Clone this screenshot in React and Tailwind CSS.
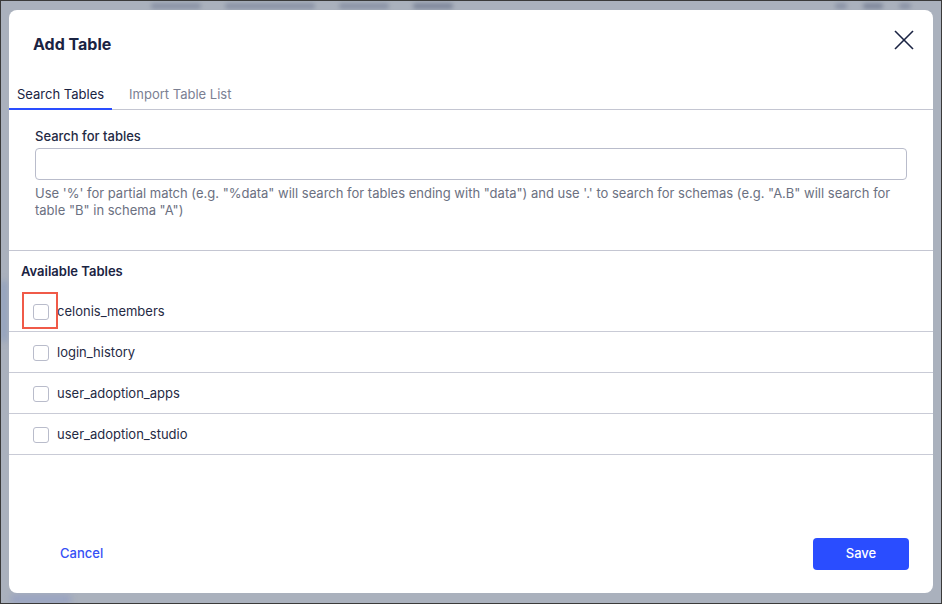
import React from "react";

const rows = ["celonis_members", "login_history", "user_adoption_apps", "user_adoption_studio"];

function Checkbox() {
  return <div className="w-4 h-4 rounded-[3px] border border-[#b9bccb] bg-white shrink-0" />;
}

export default function App() {
  return (
    <div
      className="relative w-[942px] h-[604px] overflow-hidden border border-[#3a3a3a] bg-[#aab1bd] pt-[9px] pl-[8px] pr-[8px] pb-[10px]"
      style={{ fontFamily: "Inter, 'Noto Sans', sans-serif" }}
    >
      {/* blurred background strip behind the overlay */}
      <div className="absolute top-0 left-0 right-0 h-[9px] flex items-center gap-6 pl-[150px] blur-[2px]">
        <div className="h-[6px] w-[50px] bg-[#8a93a6] rounded" />
        <div className="h-[6px] w-[90px] bg-[#8a93a6] rounded" />
        <div className="h-[6px] w-[50px] bg-[#8a93a6] rounded" />
        <div className="h-[6px] w-[40px] bg-[#7f889c] rounded" />
        <div className="ml-auto mr-[30px] flex gap-4">
          <div className="h-[6px] w-[12px] bg-[#8a93a6] rounded" />
          <div className="h-[6px] w-[20px] bg-[#7f889c] rounded" />
          <div className="h-[6px] w-[12px] bg-[#8a93a6] rounded" />
        </div>
      </div>
      <div className="absolute left-0 top-[280px] w-[6px] h-[60px] bg-[#8fa0bf] blur-[3px]" />
      <div className="absolute left-[10px] bottom-0 w-[60px] h-[8px] bg-[#98a2c2] blur-[3px]" />

      <div className="relative w-full h-full bg-white rounded-[8px] flex flex-col">
        {/* header */}
        <div className="flex items-start justify-between pl-[24px] pr-[17px] pt-[24px] h-[70px]">
          <h2 className="text-[16px] leading-[20px] font-bold text-[#1a2342]">Add Table</h2>
          <button className="w-[24px] h-[24px] -mt-[6px] flex items-center justify-center text-[#1a2342]">
            <svg width="22" height="22" viewBox="0 0 22 22" fill="none" stroke="currentColor" strokeWidth="1.6">
              <line x1="2" y1="2" x2="20" y2="20" />
              <line x1="20" y1="2" x2="2" y2="20" />
            </svg>
          </button>
        </div>

        {/* tabs */}
        <div className="flex border-b border-[#c4c6d2] h-[30px] gap-[9px]">
          <div className="px-[8px] pt-[2px] flex items-center text-[13px] text-[#1a2342] border-b-2 border-[#2a4dff] -mb-px">
            Search Tables
          </div>
          <div className="px-[8px] pt-[2px] flex items-center text-[13px] text-[#7b8093] pb-[2px]">Import Table List</div>
        </div>

        {/* search section */}
        <div className="px-[26px] pt-[17px] h-[141px] border-b border-[#c4c6d2]">
          <label className="block text-[13px] leading-[18px] font-medium text-[#1f2a44]">Search for tables</label>
          <input
            className="mt-[3px] w-full h-[32px] rounded-[4px] border border-[#b9bccb] outline-none px-2 text-[13px]"
            type="text"
          />
          <p className="mt-[5px] text-[13px] leading-[17px] text-[#6b7081]">
            Use '%' for partial match (e.g. "%data" will search for tables ending with "data") and use '.' to search for schemas (e.g. "A.B" will search for table "B" in schema "A")
          </p>
        </div>

        {/* available tables */}
        <div className="pt-[11px]">
          <div className="pl-[12px] text-[13px] leading-[18px] font-semibold text-[#1a2342] mb-[11px]">Available Tables</div>
          {rows.map((r, i) => (
            <div key={r} className="h-[41px] pt-[2px] border-b border-[#c9cbd6] flex items-center pl-[24px] gap-[8px]">
              <div className="relative">
                <Checkbox />
                {i === 0 && (
                  <div className="absolute -left-[11px] -top-[12px] w-[36px] h-[37px] border-2 border-[#f05a48]" />
                )}
              </div>
              <span className="text-[13px] text-[#1f2a44]">{r}</span>
            </div>
          ))}
        </div>

        {/* footer */}
        <div className="mt-auto flex items-center justify-between pl-[35px] pr-[24px] pb-[23px]">
          <button className="px-[16px] h-[32px] text-[13px] font-medium text-[#3550f5]">Cancel</button>
          <button className="w-[96px] h-[32px] rounded-[4px] bg-[#2a4dff] text-white text-[13px] font-medium">Save</button>
        </div>
      </div>
    </div>
  );
}
